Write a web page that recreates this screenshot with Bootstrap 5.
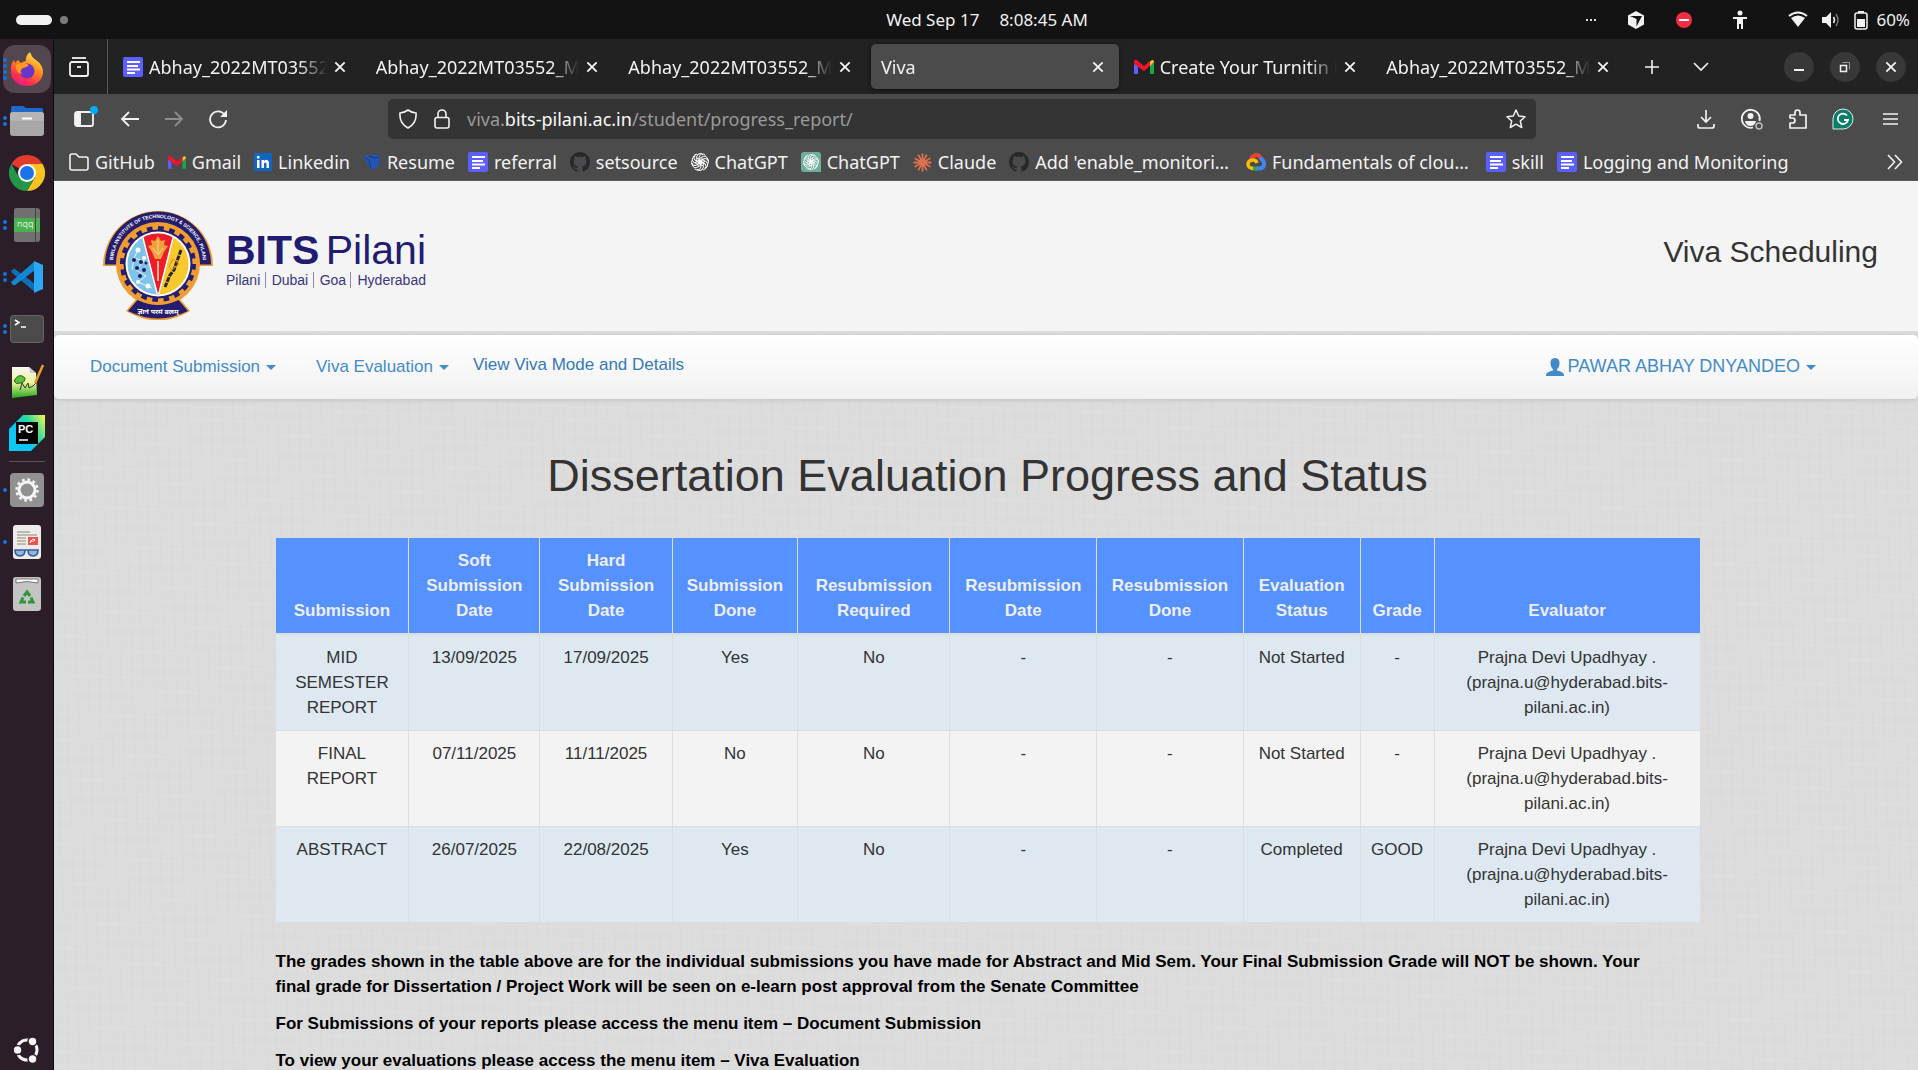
<!DOCTYPE html>
<html lang="en">
<head>
<meta charset="utf-8">
<meta name="viewport" content="width=device-width, initial-scale=1">
<title>Viva</title>
<link rel="stylesheet" href="https://cdn.jsdelivr.net/npm/bootstrap@5.3.0/dist/css/bootstrap.min.css">
<script src="https://cdn.jsdelivr.net/npm/bootstrap@5.3.0/dist/js/bootstrap.bundle.min.js"></script>
<style>
  body { font-family: "Noto Sans", sans-serif; font-size: 17px; line-height: 24px; background: #131313; color: #f2f2f2; }
  svg { display: block; flex: none; }
  button { background: none; border: 0; padding: 0; color: inherit; }
  a { color: inherit; text-decoration: none; }

  /* system bar */
  .sysbar { height: 39px; background: #131313; flex: none; }
  .sysbar .side { flex: 1 1 0; }
  .ws-pill { width: 36px; height: 10px; border-radius: 5px; background: #f2f2f2; }
  .ws-dot { width: 8px; height: 8px; border-radius: 50%; background: #7d7d7d; }
  .sys-time { gap: 20px; }
  .tray-apps { gap: 32px; margin-right: 40px; }
  .tray-status { gap: 14px; margin: 0 8px 0 40px; }
  .desk { flex: 1 1 0; min-height: 0; }

  /* dock */
  .dock { width: 54px; background: #2c1e28; border-right: 1px solid #0c080b; flex: none; padding-top: 6px; }
  .dock-item { width: 48px; height: 48px; border-radius: 12px; position: relative; flex: none; }
  .dock-item.on { background: #53464f; }
  .dock-item.apps { height: 40px; }
  .dock-dots { position: absolute; left: 0; top: 0; bottom: 0; width: 5px; gap: 2px; }
  .dock-dots i { width: 4px; height: 4px; border-radius: 50%; background: #0f76e8; }
  .dock-rule { width: 36px; height: 1px; background: #5d525a; flex: none; }

  /* tab strip */
  .tabstrip { height: 55px; background: #222222; flex: none; font-size: 18px; }
  .view-btn { width: 54px; height: 55px; padding-left: 15px; border-right: 1px solid #5a5a5a; }
  .tabs { gap: 5px; padding-left: 5px; flex: 0 1 1516px; min-width: 0; }
  .tab { flex: 1 1 0; min-width: 0; height: 45px; border-radius: 5px; padding: 0 14px 0 10px; gap: 6px; }
  .tab.on { background: #4b4b4b; box-shadow: 0 1px 4px #0008; }
  .tab-name { flex: 1; min-width: 0; overflow: hidden; white-space: nowrap; -webkit-mask-image: linear-gradient(to left, transparent, #000 28px); mask-image: linear-gradient(to left, transparent, #000 28px); }
  .win-btn { width: 30px; height: 30px; border-radius: 50%; background: #383838; }

  /* toolbar */
  .toolbar { height: 50px; background: #4b4b4b; padding: 0 18px 0 20px; flex: none; font-size: 18px; }
  .nav-tools { width: 314px; gap: 20px; flex: none; }
  .urlbar { flex: 1; height: 40px; border-radius: 5px; background: #343434; padding: 0 10px 0 11px; gap: 17px; color: #9a9a9a; white-space: nowrap; }
  .urlbar b { font-weight: 400; color: #fbfbfb; }
  .ext-tools { width: 364px; gap: 24px; flex: none; }
  .bookmarks { height: 37px; background: #4b4b4b; border-bottom: 1px solid #5a5a5a; padding: 0 14px 0 15px; white-space: nowrap; flex: none; font-size: 18px; }
  .bm-list { gap: 13px; }
  .bm-list a { gap: 6px; }

  /* page */
  .pane { font-family: "Liberation Sans", Arial, sans-serif; line-height: 25px; color: #333333; background-color: #dcdcdc;
    background-image: repeating-linear-gradient(88deg, #0000 0 3px, #00000002 3px 5px, #0000 5px 11px), repeating-linear-gradient(2deg, #0000 0 4px, #ffffff10 4px 6px, #0000 6px 13px); }
  .masthead { height: 150px; background: #f4f4f4; padding: 0 40px 0 48px; }
  .crest { margin-top: 27px; }
  .logo-word { color: #211c70; width: 204px; margin-top: 48px; }
  .logo-big { font-size: 41px; line-height: 43px; }
  .logo-sub { font-size: 14px; line-height: 16px; color: #3a3580; }
  .logo-sub span + span { border-left: 1px solid #8e8bb5; padding-left: 6px; }
  .site-title { font-size: 30px; line-height: 34px; margin-top: 54px; }
  .menubar { height: 64px; margin-top: 4px; border-radius: 5px; background: linear-gradient(#ffffff, #f1f1f1); box-shadow: 0 1px 5px #00000022; padding: 0 102px 1px 36px; color: #428bca; font-size: 17px; }
  .menubar .dropdown-toggle::after { border-top: 5px solid; border-left: 5px solid transparent; border-right: 5px solid transparent; border-bottom: 0; margin-left: 6px; vertical-align: 2px; }
  .menu-flat { color: #337ab7; margin-left: 24px; padding-bottom: 4px; }
  .menu-user { font-size: 18px; }
  .report { max-width: 1427px; padding: 52px 0 0 3px; font-size: 17px; }
  .report h1 { font-size: 45px; line-height: 50px; margin-bottom: 37px; }
  .grades { table-layout: fixed; margin-bottom: 26px; color: #333333; border-collapse: separate; border-spacing: 0; }
  .grades > :not(caption) > * > * { padding: 10px 9px; box-shadow: none; border: 0 solid #dddddd; border-right-width: 1px; border-bottom-width: 1px; background: #f3f3f3; }
  .grades > thead > tr > th { background: #5591ff; color: #eeeeee; vertical-align: bottom; border-bottom-width: 2px; }
  .grades > tbody > tr:nth-child(odd) > td { background: #dde8f1; }
  .grades > :not(caption) > * > :last-child { border-right-width: 0; }
  .notes p { margin-bottom: 12px; color: #000000; font-weight: 700; }
</style>
</head>
<body class="vh-100 d-flex flex-column overflow-hidden">

<svg width="0" height="0" class="position-absolute" aria-hidden="true">
  <symbol id="doc" viewBox="0 0 20 20"><rect width="20" height="20" rx="2" fill="#5b5fff"/><path d="M4 5h13M4 9h11M4 12.500h13M4 16h8" stroke="#fff" stroke-width="2"/></symbol>
  <symbol id="gmail" viewBox="0 0 20 16"><path d="M0 3v12h4V6z" fill="#5b5fff"/><path d="M20 3v12h-4V6z" fill="#18a849"/><path d="M16 2.500 18 1q2-.5 2 2l-4 4z" fill="#fbc02d"/><path d="M0 3q0-3 3-1.800L10 7l6-5v5l-6 5L0 5z" fill="#f0142f"/></symbol>
  <symbol id="x" viewBox="0 0 12 12"><path d="M2 2l8 8M10 2l-8 8" stroke="#f2f2f2" stroke-width="1.600" fill="none"/></symbol>
  <symbol id="octo" viewBox="0 0 16 16"><path fill="#25292e" d="M8 0C3.580 0 0 3.580 0 8c0 3.540 2.290 6.530 5.470 7.590.4.070.55-.17.55-.38 0-.19-.01-.82-.01-1.490-2.010.37-2.530-.49-2.690-.94-.09-.23-.48-.94-.82-1.130-.28-.15-.68-.52-.01-.53.63-.01 1.080.58 1.230.82.72 1.210 1.870.87 2.330.66.07-.52.28-.87.51-1.070-1.780-.2-3.640-.89-3.640-3.950 0-.87.31-1.590.82-2.150-.08-.2-.36-1.020.08-2.120 0 0 .67-.21 2.200.82.64-.18 1.320-.27 2-.27s1.360.09 2 .27c1.530-1.040 2.200-.82 2.200-.82.44 1.100.16 1.920.08 2.120.51.56.82 1.270.82 2.150 0 3.070-1.870 3.750-3.650 3.950.29.25.54.73.54 1.480 0 1.070-.01 1.930-.01 2.200 0 .21.15.46.55.38A8 8 0 0 0 16 8c0-4.420-3.580-8-8-8z"/></symbol>
  <symbol id="knot" viewBox="-10 -10 20 20"><g fill="none" stroke="#fff" stroke-width="1.100"><path id="petal" d="M-1-3.500 3.500-6.200A4 4 0 0 1 8.500-1M-1-3.500V2L3.500 4.400M-1-3.500-1-5A4 4 0 0 1 6-7.500"/><use href="#petal" transform="rotate(60)"/><use href="#petal" transform="rotate(120)"/><use href="#petal" transform="rotate(180)"/><use href="#petal" transform="rotate(240)"/><use href="#petal" transform="rotate(300)"/></g></symbol>
</svg>

<header class="sysbar d-flex align-items-center">
  <div class="side d-flex align-items-center gap-2 ps-3"><span class="ws-pill"></span><span class="ws-dot"></span></div>
  <div class="sys-time d-flex ps-5"><span>Wed Sep 17</span><span>8:08:45 AM</span></div>
  <div class="side d-flex align-items-center justify-content-end pe-2">
    <div class="tray-apps d-flex align-items-center">
      <svg width="10" height="4" viewBox="0 0 10 4"><path d="M0 2h2M4 2h2M8 2h2" stroke="#ddd" stroke-width="2"/></svg>
      <svg width="16" height="18" viewBox="0 0 16 18"><path d="M8 0 16 4.500v9L8 18 0 13.500v-9z" fill="#f2f2f2"/><path d="M2 5h12L8.500 15.500V8z" fill="#131313"/></svg>
      <svg width="16" height="16" viewBox="0 0 16 16"><circle cx="8" cy="8" r="8" fill="#f22c42"/><path d="M3 8h10" stroke="#fff" stroke-width="2"/></svg>
    </div>
    <svg width="16" height="20" viewBox="0 0 16 20"><circle cx="8" cy="3" r="2.500" fill="#f2f2f2"/><path d="M1 7h14v2h-4v10H9v-5H7v5H5V9H1z" fill="#f2f2f2"/></svg>
    <div class="tray-status d-flex align-items-center">
      <svg width="20" height="18" viewBox="0 0 20 18"><path d="M1 5q9-7 18 0" stroke="#f2f2f2" stroke-width="2" fill="none"/><path d="M3 7q7-5 14 0l-7 9z" fill="#f2f2f2"/></svg>
      <svg width="18" height="18" viewBox="0 0 18 18"><path d="M0 6h4l5-5v16l-5-5H0z" fill="#f2f2f2"/><path d="M11.500 6q2 3 0 6" stroke="#f2f2f2" stroke-width="1.500" fill="none"/><path d="M14 3q4 6 0 12" stroke="#777" stroke-width="1.500" fill="none"/></svg>
      <svg width="14" height="20" viewBox="0 0 14 20"><rect x="1" y="3" width="12" height="16" rx="2" fill="none" stroke="#f2f2f2" stroke-width="1.500"/><path d="M4 1h6v2H4zM3 9h8v8H3z" fill="#f2f2f2"/></svg>
    </div>
    <span>60%</span>
  </div>
</header>

<div class="desk d-flex overflow-hidden">
  <nav class="dock d-flex flex-column align-items-center gap-1" aria-label="Dock">
    <button class="dock-item on d-flex align-items-center justify-content-center" aria-label="Firefox"><span class="dock-dots d-flex flex-column justify-content-center align-items-center"><i></i><i></i><i></i><i></i></span>
      <svg width="34" height="34" viewBox="0 0 34 34"><defs><linearGradient id="ff" x1=".8" y1="0" x2=".3" y2="1"><stop offset="0" stop-color="#fff04a"/><stop offset=".45" stop-color="#ff8a1c"/><stop offset=".8" stop-color="#ff2f4f"/><stop offset="1" stop-color="#e3188f"/></linearGradient></defs><path d="M20 0q2 6 6 8 7 5 7 12a16 14 0 0 1-32 0Q0 13 4 8l1 3 3-3 3 3q3-2 5-2-1-5 4-9z" fill="url(#ff)"/><circle cx="17" cy="19" r="7.500" fill="#6a35c9"/><path d="M6 13q7-4 13 0-3 3-6 3-4 2-1 6-7-1-6-9z" fill="#ff9a1f"/></svg></button>
    <button class="dock-item d-flex align-items-center justify-content-center" aria-label="Files"><span class="dock-dots d-flex flex-column justify-content-center align-items-center"><i></i><i></i></span>
      <svg width="34" height="32" viewBox="0 0 34 32"><path d="M1 3q0-2 2-2h10l3 2h15q2 0 2 2v8H1z" fill="#1b6acb"/><rect x="0" y="7" width="34" height="24" rx="3" fill="#a8a8a8"/><path d="M0 10q0-3 3-3h28q3 0 3 3v6H0z" fill="#b4b4b4"/><path d="M12 13.500h10" stroke="#fff" stroke-width="2"/></svg></button>
    <button class="dock-item d-flex align-items-center justify-content-center" aria-label="Chrome">
      <svg width="36" height="36" viewBox="-18 -18 36 36"><path d="M0 0-15.600-9A18 18 0 0 1 15.600-9z" fill="#e33b2e"/><path d="M0-9h15.600A18 18 0 0 1 0 18L7.800 4.500z" fill="#fcc31e"/><path d="M-15.600-9A18 18 0 0 0 0 18L7.800 4.500-7.800 4.500z" fill="#23964a"/><circle r="9" fill="#fff"/><circle r="7" fill="#1a73e8"/></svg></button>
    <button class="dock-item d-flex align-items-center justify-content-center" aria-label="Notepadqq"><span class="dock-dots d-flex flex-column justify-content-center align-items-center"><i></i><i></i></span>
      <svg width="26" height="34" viewBox="0 0 26 34"><path d="M0 2q0-2 2-2h21q3 0 3 3v28q0 3-3 3H2q-2 0-2-2z" fill="#707070"/><path d="M0 10h26v14H0z" fill="#4caf50"/><path d="M21.500 0v34" stroke="#444"/><text x="3" y="19" font-family="Noto Sans" font-size="9" fill="#d6f5d6">nqq</text></svg></button>
    <button class="dock-item d-flex align-items-center justify-content-center" aria-label="Visual Studio Code"><span class="dock-dots d-flex flex-column justify-content-center align-items-center"><i></i><i></i></span>
      <svg width="32" height="32" viewBox="0 0 32 32"><path d="M1 9q2-2 3-1l20 15v8L0 11z" fill="#0f6fb8"/><path d="M1 23q2 2 3 1L24 9V0L0 21z" fill="#1487d4"/><path d="M23 0l9 4v24l-9 4z" fill="#2aa8f2"/></svg></button>
    <button class="dock-item d-flex align-items-center justify-content-center" aria-label="Terminal"><span class="dock-dots d-flex flex-column justify-content-center align-items-center"><i></i><i></i></span>
      <svg width="34" height="28" viewBox="0 0 34 28"><rect x=".5" y=".5" width="33" height="27" rx="3" fill="#4b4b4b" stroke="#666"/><path d="M5 5l4 2.500-4 2.500M11 12h5" stroke="#fff" stroke-width="1.500" fill="none"/></svg></button>
    <button class="dock-item d-flex align-items-center justify-content-center" aria-label="Notepad++">
      <svg width="34" height="34" viewBox="0 0 34 34"><defs><linearGradient id="np" x2="0" y2="1"><stop offset="0" stop-color="#f6f6f6"/><stop offset=".5" stop-color="#eef59a"/><stop offset="1" stop-color="#26a81c"/></linearGradient></defs><path d="M2 3h17l7 6 1 22-25 3z" fill="url(#np)"/><path d="M19 3l1 6h6z" fill="#c9c9d6"/><path d="M4 17q5-9 11-3 0 5-5 5-4 2-6-2z" fill="#56c23a" stroke="#2c5c1e"/><path d="M10 26l2-7 3 5 3-5 1 5 4-2 3-3" stroke="#333" fill="none"/><path d="M33 1 25 19" stroke="#e8a02c" stroke-width="2.500"/></svg></button>
    <button class="dock-item d-flex align-items-center justify-content-center" aria-label="PyCharm">
      <svg width="36" height="36" viewBox="0 0 36 36"><defs><linearGradient id="pc" x1="0" y1=".6" x2="1" y2="0"><stop offset=".3" stop-color="#0cc6f5"/><stop offset=".6" stop-color="#30d9a0"/><stop offset="1" stop-color="#fcf84a"/></linearGradient></defs><path d="M0 14 14 0h22v22L22 36H0z" fill="url(#pc)"/><rect x="7" y="7" width="22" height="22" fill="#000"/><text x="9" y="18" font-family="Liberation Sans" font-weight="700" font-size="11" fill="#fff">PC</text><path d="M10 25h9" stroke="#fff" stroke-width="1.500"/></svg></button>
    <span class="dock-rule"></span>
    <button class="dock-item d-flex align-items-center justify-content-center" aria-label="Settings"><span class="dock-dots d-flex flex-column justify-content-center align-items-center"><i></i></span>
      <svg width="34" height="34" viewBox="-17 -17 34 34"><rect x="-17" y="-17" width="34" height="34" rx="4" fill="#919191"/><circle r="8" fill="none" stroke="#f5f5f5" stroke-width="3"/><circle r="10.500" fill="none" stroke="#f5f5f5" stroke-width="2.500" stroke-dasharray="2.750"/></svg></button>
    <button class="dock-item d-flex align-items-center justify-content-center" aria-label="Document Viewer"><span class="dock-dots d-flex flex-column justify-content-center align-items-center"><i></i></span>
      <svg width="28" height="34" viewBox="0 0 28 34"><rect width="28" height="34" rx="3" fill="#ececec"/><path d="M4 7h13M4 10h20M4 13h9M4 16h9M4 19h9" stroke="#b0a99a" stroke-width="1.300"/><rect x="15" y="12" width="10" height="8" fill="#f0524a"/><path d="M17 18q3-6 5-3-1 2-5 1" stroke="#fff" fill="none"/><g fill="#9db4d0" stroke="#2b5ea5" stroke-width="1.600"><path d="M2 25h10q0 6-5 6t-5-6zM15 25h10q0 6-5 6t-5-6zM12 25h3"/></g></svg></button>
    <button class="dock-item d-flex align-items-center justify-content-center" aria-label="Trash">
      <svg width="28" height="34" viewBox="0 0 28 34"><rect width="28" height="34" rx="3" fill="#c4c4c4"/><path d="M3 2h22v4q-11-3-22 0z" fill="#fff" stroke="#777"/><g fill="none" stroke="#2f9438" stroke-width="3"><path d="M11 19l3-4 3 4"/><path d="M18 20.500l2 4.500h-5"/><path d="M10 20.500l-2 4.500h5"/></g></svg></button>
    <button class="dock-item apps mt-auto d-flex align-items-center justify-content-center" aria-label="Show Apps">
      <svg width="26" height="26" viewBox="-13 -13 26 26"><circle r="10" fill="none" stroke="#f5f5f5" stroke-width="3"/><g fill="#f5f5f5" stroke="#2c1e28" stroke-width="1.500"><circle cx="-9.500" r="4.500"/><circle cx="5.500" cy="-8.500" r="4.500"/><circle cx="5.500" cy="9" r="4.500"/></g></svg></button>
  </nav>

  <div class="flex-grow-1 d-flex flex-column overflow-hidden">
    <div class="tabstrip d-flex align-items-center pe-2">
      <button class="view-btn" aria-label="Recent tabs"><svg width="20" height="20" viewBox="0 0 20 20" fill="none" stroke="#f2f2f2" stroke-width="1.800"><path d="M3 1h14"/><rect x="1" y="5" width="18" height="14" rx="2"/><path d="M8 10h4"/></svg></button>
      <div class="tabs d-flex">
        <div class="tab d-flex align-items-center"><svg width="20" height="20"><use href="#doc"/></svg><span class="tab-name">Abhay_2022MT03552_</span><button aria-label="Close tab"><svg width="14" height="14"><use href="#x"/></svg></button></div>
        <div class="tab d-flex align-items-center"><span class="tab-name">Abhay_2022MT03552_MI</span><button aria-label="Close tab"><svg width="14" height="14"><use href="#x"/></svg></button></div>
        <div class="tab d-flex align-items-center"><span class="tab-name">Abhay_2022MT03552_MI</span><button aria-label="Close tab"><svg width="14" height="14"><use href="#x"/></svg></button></div>
        <div class="tab on d-flex align-items-center"><span class="tab-name">Viva</span><button aria-label="Close tab"><svg width="14" height="14"><use href="#x"/></svg></button></div>
        <div class="tab d-flex align-items-center"><svg width="20" height="16"><use href="#gmail"/></svg><span class="tab-name">Create Your Turnitin P</span><button aria-label="Close tab"><svg width="14" height="14"><use href="#x"/></svg></button></div>
        <div class="tab d-flex align-items-center"><span class="tab-name">Abhay_2022MT03552_MI</span><button aria-label="Close tab"><svg width="14" height="14"><use href="#x"/></svg></button></div>
      </div>
      <button class="ms-3 ps-1" aria-label="New tab"><svg width="16" height="16" viewBox="0 0 16 16"><path d="M8 1v14M1 8h14" stroke="#f2f2f2" stroke-width="1.600"/></svg></button>
      <button class="ms-4 ps-2" aria-label="List all tabs"><svg width="18" height="16" viewBox="0 0 18 16"><path d="M2 4l7 7 7-7" stroke="#f2f2f2" stroke-width="1.600" fill="none"/></svg></button>
      <div class="ms-auto d-flex gap-3 me-1">
        <button class="win-btn d-flex align-items-center justify-content-center" aria-label="Minimize"><svg width="12" height="12"><path d="M1 9h10" stroke="#f2f2f2" stroke-width="2"/></svg></button>
        <button class="win-btn d-flex align-items-center justify-content-center" aria-label="Restore"><svg width="12" height="12" fill="none" stroke="#f2f2f2"><path d="M3.500 1.500h7v7" stroke="#999"/><rect x="1.500" y="4.500" width="6" height="6" stroke-width="1.500"/></svg></button>
        <button class="win-btn d-flex align-items-center justify-content-center" aria-label="Close"><svg width="14" height="14"><use href="#x"/></svg></button>
      </div>
    </div>

    <div class="toolbar d-flex align-items-center">
      <div class="nav-tools d-flex align-items-center">
        <button aria-label="Sidebar"><svg width="26" height="26" viewBox="0 0 26 26"><rect x="1" y="6" width="18" height="14" rx="2" fill="none" stroke="#f2f2f2" stroke-width="1.800"/><path d="M1 6h6v14H1z" fill="#f2f2f2"/><circle cx="20" cy="4" r="4" fill="#00adf5"/></svg></button>
        <button aria-label="Back"><svg width="20" height="18" viewBox="0 0 20 18"><path d="M9 2 2 9l7 7M2 9h17" stroke="#f2f2f2" stroke-width="1.800" fill="none"/></svg></button>
        <button class="ms-1" aria-label="Forward"><svg width="20" height="18" viewBox="0 0 20 18"><path d="M11 2l7 7-7 7M18 9H1" stroke="#8d8d8d" stroke-width="1.800" fill="none"/></svg></button>
        <button class="ms-1" aria-label="Reload"><svg width="20" height="20" viewBox="0 0 20 20"><path d="M17 6.500A8 8 0 1 0 18 11" stroke="#f2f2f2" stroke-width="1.800" fill="none"/><path d="M19 1v7h-7z" fill="#f2f2f2"/></svg></button>
      </div>
      <div class="urlbar d-flex align-items-center">
        <svg width="18" height="20" viewBox="0 0 18 20" fill="none" stroke="#f2f2f2" stroke-width="1.600"><path d="M9 1q4 3 8 3 1 10-8 15Q0 14 1 4q4 0 8-3z"/></svg>
        <svg width="16" height="20" viewBox="0 0 16 20" fill="none" stroke="#f2f2f2" stroke-width="1.600"><rect x="1" y="8.500" width="14" height="10.500" rx="2"/><path d="M4 8.500V5a4 4 0 0 1 8 0v3.500"/></svg>
        <span class="flex-grow-1">viva.<b>bits-pilani.ac.in</b>/student/progress_report/</span>
        <button aria-label="Bookmark this page"><svg width="20" height="20" viewBox="0 0 20 20"><path d="M10 1l2.700 6 6.300.7-4.700 4.300 1.400 6.500L10 15.200l-5.700 3.300L5.700 12 1 7.700 7.300 7z" fill="none" stroke="#f2f2f2" stroke-width="1.500" stroke-linejoin="round"/></svg></button>
      </div>
      <div class="ext-tools d-flex align-items-center justify-content-end">
        <button aria-label="Downloads"><svg width="20" height="20" viewBox="0 0 20 20" fill="none" stroke="#f2f2f2" stroke-width="1.700"><path d="M10 1v12M5 8l5 5 5-5M2 15v2q0 2 2 2h12q2 0 2-2v-2"/></svg></button>
        <button aria-label="Account"><svg width="24" height="22" viewBox="0 0 24 22"><path d="M19.500 13A9 9 0 1 0 13 19.500" fill="none" stroke="#f2f2f2" stroke-width="1.800"/><circle cx="10.500" cy="8" r="3" fill="#f2f2f2"/><path d="M5 13h11q-1 5-5.500 5T5 13z" fill="#f2f2f2"/><circle cx="19" cy="18" r="3" fill="none" stroke="#bbb" stroke-width="1.500"/></svg></button>
        <button aria-label="Extensions"><svg width="20" height="20" viewBox="0 0 20 20"><path d="M2 19v-5h2.500a2.500 2.500 0 0 0 0-5H2V6h5V3.500a2.500 2.500 0 0 1 5 0V6h6v13z" fill="none" stroke="#f2f2f2" stroke-width="1.700" stroke-linejoin="round"/></svg></button>
        <button aria-label="Grammarly"><svg width="22" height="22" viewBox="0 0 22 22"><path d="M1 21V11A10 10 0 1 1 11 21z" fill="#0a7d6a" stroke="#d8efe9"/><path d="M15 7.500A5.200 5.200 0 1 0 16 12h-4" fill="none" stroke="#fff" stroke-width="1.800"/></svg></button>
        <button class="ms-1" aria-label="Menu"><svg width="18" height="16" viewBox="0 0 18 16"><path d="M1 3h15M1 8h15M1 13h15" stroke="#f2f2f2" stroke-width="1.600"/></svg></button>
      </div>
    </div>

    <div class="bookmarks d-flex align-items-center">
      <div class="bm-list d-flex align-items-center flex-grow-1">
        <a href="#" class="d-flex align-items-center"><svg width="20" height="20" viewBox="0 0 20 20"><path d="M1 16V4q0-2 2-2h4l3 3h7q2 0 2 2v9q0 2-2 2H3q-2 0-2-2z" fill="none" stroke="#f2f2f2" stroke-width="1.600"/></svg>GitHub</a>
        <a href="#" class="d-flex align-items-center"><svg width="18" height="15"><use href="#gmail"/></svg>Gmail</a>
        <a href="#" class="d-flex align-items-center"><svg width="18" height="18" viewBox="0 0 18 18"><rect width="18" height="18" rx="1" fill="#0f66c3"/><path d="M3 7h2.500v8H3zM3 3h2.500v2.500H3zM7.500 7H10v1q3-3 5 1v6h-2.500v-4.500q-1.200-2-2.500 0V15H7.500z" fill="#fff"/></svg>Linkedin</a>
        <a href="#" class="d-flex align-items-center"><svg width="18" height="18" viewBox="0 0 18 18"><path d="M0 4l4-2 2 1 7-2 4 3-1 10-8 3-5-8z" fill="#2456b0"/><path d="M1 4l5 3M6 3l5 2 5-1M6 7l2 9" stroke="#173a80" fill="none"/></svg>Resume</a>
        <a href="#" class="d-flex align-items-center"><svg width="20" height="20"><use href="#doc"/></svg>referral</a>
        <a href="#" class="d-flex align-items-center"><svg width="20" height="20"><use href="#octo"/></svg>setsource</a>
        <a href="#" class="d-flex align-items-center"><svg width="18" height="18"><use href="#knot"/></svg>ChatGPT</a>
        <a href="#" class="d-flex align-items-center"><svg width="20" height="20"><path d="M3 0h14q3 0 3 3v17H3q-3 0-3-3V3q0-3 3-3z" fill="#6fae9c"/><use href="#knot" x="2" y="2" width="16" height="16"/></svg>ChatGPT</a>
        <a href="#" class="d-flex align-items-center"><svg width="19" height="19" viewBox="-10 -10 20 20"><g stroke="#e0704e" stroke-width="1.900"><path d="M0-9.500V9.500M-9.500 0H9.500M-4.500-8.300 4.500 8.300M4.500-8.300-4.500 8.300M-8.300-4.500 8.300 4.500M-8.300 4.500 8.300-4.500"/></g></svg>Claude</a>
        <a href="#" class="d-flex align-items-center"><svg width="20" height="20"><use href="#octo"/></svg>Add 'enable_monitori…</a>
        <a href="#" class="d-flex align-items-center ms-1"><svg width="20" height="18" viewBox="0 0 20 18" fill="none" stroke-width="4"><path d="M5 6q2-4 5.500-4Q14 2 15 6" stroke="#ea4335"/><path d="M14 5q4 2 4 6 0 4-4 4.500h-4" stroke="#4285f4"/><path d="M11 15.500H6" stroke="#34a853"/><path d="M7 15.500Q2 15 2 11q.500-4 5-4 3 0 4 3" stroke="#fbbc05" stroke-width="3.500"/></svg>Fundamentals of clou…</a>
        <a href="#" class="d-flex align-items-center ms-1"><svg width="20" height="20"><use href="#doc"/></svg>skill</a>
        <a href="#" class="d-flex align-items-center"><svg width="20" height="20"><use href="#doc"/></svg>Logging and Monitoring</a>
      </div>
      <button aria-label="More bookmarks"><svg width="18" height="18" viewBox="0 0 18 18"><path d="M2 2l6.500 7L2 16M9 2l6.500 7L9 16" stroke="#f2f2f2" stroke-width="1.600" fill="none"/></svg></button>
    </div>

    <main class="pane flex-grow-1 overflow-hidden">
      <div class="masthead d-flex justify-content-between align-items-start">
        <a href="#" class="d-flex align-items-start">
          <svg class="crest" width="112" height="112" viewBox="-56 -56 112 112" role="img" aria-label="BITS Pilani crest">
            <defs><clipPath id="disc"><circle r="30.500"/></clipPath><path id="arc" d="M-45-1A45 45 0 0 1 45-1"/></defs>
            <path d="M-55 2A55 55 0 1 1 55 2H38V-4H-38V2z" fill="#ef9d33"/>
            <path d="M-53 .5A53 53 0 1 1 53 .5H41V-4H-41V.500z" fill="#241c6c"/>
            <circle r="42" fill="#ef9d33"/><circle r="34.500" fill="#241c6c"/>
            <circle r="36" fill="none" stroke="#241c6c" stroke-width="4" stroke-dasharray="5.650"/>
            <circle r="32.500" fill="#fff"/>
            <g clip-path="url(#disc)"><path d="M-40-40H0V40h-40z" fill="#7dc4e8"/><path d="M0-40h40v80H0z" fill="#f7c92d"/><path d="M-17-34h34L0 33z" fill="#ee1c2b" stroke="#fff" stroke-width="1.500"/>
            <g stroke="#fff" stroke-width=".8"><path d="M-20-14l-4 8 10 3-8 9 10 6-8 6 14 6M-24-6l-2 12" fill="none"/></g>
            <g fill="#241c6c"><circle cx="-24" cy="-4" r="2"/><circle cx="-17" cy="-2" r="2"/><circle cx="-21" cy="4" r="2"/><circle cx="-14" cy="6" r="2"/><circle cx="-18" cy="12" r="2"/><circle cx="-12" cy="-1" r="1.500"/></g>
            <g fill="#fff"><circle cx="-20" cy="-14" r="2.500"/><circle cx="-14" cy="-6" r="2"/><circle cx="-20" cy="18" r="2"/><circle cx="-10" cy="22" r="2.500"/></g>
            <path d="M23-14 18 0l-2 6-4 5-5 12" stroke="#2a2430" stroke-width="3" fill="none" stroke-dasharray="5 1"/><path d="M11 2l4-7 6 5-7 6z" stroke="#e08a1e" fill="none"/></g>
            <path d="M0-3V17" stroke="#f7b58a" stroke-width="2"/><path d="M0-28l3 5 4-1-1 5 4 1-4 6-3 7h-6l-3-7-4-6 4-1-1-5 4 1z" fill="#f2a03a"/><path d="M0-24v14M-5-16 0-9l5-7" stroke="#fbd79a" fill="none"/>
            <text font-family="Liberation Sans" font-weight="700" font-size="5" fill="#fff"><textPath href="#arc" startOffset="50%" text-anchor="middle">BIRLA INSTITUTE OF TECHNOLOGY &amp; SCIENCE, PILANI</textPath></text>
            <path d="M-21 34Q0 44 21 34L32 47Q0 66-32 47z" fill="#ef9d33"/><path d="M-20.500 36Q0 46 20.500 36L30 47Q0 62-30 47z" fill="#241c6c"/>
            <text y="50" text-anchor="middle" font-family="Noto Sans, sans-serif" font-weight="700" font-size="7" fill="#fff">ज्ञानं परमं बलम्</text>
          </svg>
          <span class="logo-word d-block ms-2 ps-1">
            <span class="logo-big d-flex justify-content-between"><strong>BITS</strong><span>Pilani</span></span>
            <span class="logo-sub d-flex justify-content-between"><span>Pilani</span><span>Dubai</span><span>Goa</span><span>Hyderabad</span></span>
          </span>
        </a>
        <div class="site-title">Viva Scheduling</div>
      </div>

      <nav class="menubar d-flex align-items-center" aria-label="Main">
        <a href="#" class="dropdown-toggle">Document Submission</a>
        <a href="#" class="dropdown-toggle ms-4 ps-3">Viva Evaluation</a>
        <a href="#" class="menu-flat">View Viva Mode and Details</a>
        <a href="#" class="menu-user dropdown-toggle ms-auto"><svg width="18" height="18" viewBox="0 0 18 18" class="d-inline-block align-text-bottom me-1"><path d="M9 0q5 0 4.500 6-.5 4-2.500 5v1.500q7 1.500 7 4.500v1H0v-1q0-3 7-4.500V11Q5 10 4.500 6 4 0 9 0z" fill="#428bca"/></svg>PAWAR ABHAY DNYANDEO</a>
      </nav>

      <div class="report mx-auto">
        <h1 class="text-center fw-normal">Dissertation Evaluation Progress and Status</h1>
        <table class="table grades text-center">
          <colgroup>
            <col style="width:9.4%"><col style="width:9.2%"><col style="width:9.3%"><col style="width:8.8%"><col style="width:10.7%"><col style="width:10.3%"><col style="width:10.3%"><col style="width:8.2%"><col style="width:5.2%"><col style="width:18.6%">
          </colgroup>
          <thead>
            <tr><th>Submission</th><th>Soft Submission Date</th><th>Hard Submission Date</th><th>Submission Done</th><th>Resubmission Required</th><th>Resubmission Date</th><th>Resubmission Done</th><th>Evaluation Status</th><th>Grade</th><th>Evaluator</th></tr>
          </thead>
          <tbody>
            <tr><td>MID SEMESTER REPORT</td><td>13/09/2025</td><td>17/09/2025</td><td>Yes</td><td>No</td><td>-</td><td>-</td><td>Not Started</td><td>-</td><td>Prajna Devi Upadhyay .<br>(prajna.u@hyderabad.bits-pilani.ac.in)</td></tr>
            <tr><td>FINAL REPORT</td><td>07/11/2025</td><td>11/11/2025</td><td>No</td><td>No</td><td>-</td><td>-</td><td>Not Started</td><td>-</td><td>Prajna Devi Upadhyay .<br>(prajna.u@hyderabad.bits-pilani.ac.in)</td></tr>
            <tr><td>ABSTRACT</td><td>26/07/2025</td><td>22/08/2025</td><td>Yes</td><td>No</td><td>-</td><td>-</td><td>Completed</td><td>GOOD</td><td>Prajna Devi Upadhyay .<br>(prajna.u@hyderabad.bits-pilani.ac.in)</td></tr>
          </tbody>
        </table>
        <div class="notes">
          <p>The grades shown in the table above are for the individual submissions you have made for Abstract and Mid Sem. Your Final Submission Grade will NOT be shown. Your<br>final grade for Dissertation / Project Work will be seen on e-learn post approval from the Senate Committee</p>
          <p>For Submissions of your reports please access the menu item – Document Submission</p>
          <p>To view your evaluations please access the menu item – Viva Evaluation</p>
        </div>
      </div>
    </main>
  </div>
</div>
</body>
</html>
